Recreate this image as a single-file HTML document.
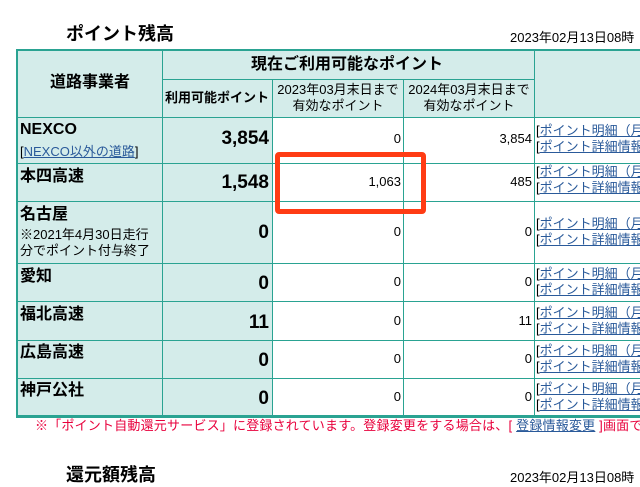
<!DOCTYPE html>
<html><head><meta charset="utf-8"><style>
body{margin:0;width:640px;height:480px;overflow:hidden;background:#fff;font-family:"Liberation Sans","Noto Sans CJK JP",sans-serif;color:#000;position:relative}
.a{position:absolute;white-space:nowrap}
.bg{position:absolute;background:#d4ecea}
.h{position:absolute;background:#2aa392;height:1px}
.v{position:absolute;background:#2aa392;width:1px}
.t{font-size:13px;line-height:16px}
.b{font-weight:bold}
.n{font-size:19px;line-height:22px;font-weight:bold;text-align:right}
.r{text-align:right}
a{color:#2a5a9a;text-decoration:underline}
.c{text-align:center}
.nm{font-size:16px;line-height:18px;font-weight:bold}
</style></head><body>
<div class="a b" style="left:66px;top:20px;font-size:18px">ポイント残高</div>
<div class="a t" style="left:510px;top:30px">2023年02月13日08時</div>

<div class="bg" style="left:17px;top:49px;width:255px;height:368px"></div>
<div class="bg" style="left:162px;top:49px;width:478px;height:68px"></div>

<div class="h" style="left:16px;top:49px;width:624px;height:2px"></div>
<div class="h" style="left:162px;top:79px;width:372px"></div>
<div class="h" style="left:16px;top:117px;width:624px"></div>
<div class="h" style="left:16px;top:163px;width:624px"></div>
<div class="h" style="left:16px;top:201px;width:624px"></div>
<div class="h" style="left:16px;top:263px;width:624px"></div>
<div class="h" style="left:16px;top:301px;width:624px"></div>
<div class="h" style="left:16px;top:340px;width:624px"></div>
<div class="h" style="left:16px;top:378px;width:624px"></div>
<div class="h" style="left:16px;top:415px;width:624px;height:3px"></div>
<div class="v" style="left:16px;top:49px;height:369px;width:2px"></div>
<div class="v" style="left:162px;top:49px;height:368px"></div>
<div class="v" style="left:272px;top:79px;height:338px"></div>
<div class="v" style="left:403px;top:79px;height:338px"></div>
<div class="v" style="left:534px;top:49px;height:368px"></div>

<div class="a nm" style="left:50px;top:74px">道路事業者</div>
<div class="a nm" style="left:251px;top:56px">現在ご利用可能なポイント</div>
<div class="a b t" style="left:165px;top:90px">利用可能ポイント</div>
<div class="a t c" style="left:273px;top:82px;width:130px">2023年03月末日まで<br>有効なポイント</div>
<div class="a t c" style="left:404px;top:82px;width:130px">2024年03月末日まで<br>有効なポイント</div>

<div class="a nm" style="left:20px;top:121px">NEXCO</div>
<div class="a t" style="left:20px;top:144px">[<a>NEXCO以外の道路</a>]</div>
<div class="a nm" style="left:20px;top:168px">本四高速</div>
<div class="a nm" style="left:20px;top:206px">名古屋</div>
<div class="a t" style="left:20px;top:227px">※2021年4月30日走行<br>分でポイント付与終了</div>
<div class="a nm" style="left:20px;top:268px">愛知</div>
<div class="a nm" style="left:20px;top:306px">福北高速</div>
<div class="a nm" style="left:20px;top:344px">広島高速</div>
<div class="a nm" style="left:20px;top:382px">神戸公社</div>

<div class="a n" style="left:163px;width:106px;top:128px">3,854</div>
<div class="a n" style="left:163px;width:106px;top:172px">1,548</div>
<div class="a n" style="left:163px;width:106px;top:222px">0</div>
<div class="a n" style="left:163px;width:106px;top:273px">0</div>
<div class="a n" style="left:163px;width:106px;top:312px">11</div>
<div class="a n" style="left:163px;width:106px;top:350px">0</div>
<div class="a n" style="left:163px;width:106px;top:388px">0</div>

<div class="a t r" style="left:273px;width:128px;top:131px">0</div>
<div class="a t r" style="left:273px;width:128px;top:174px">1,063</div>
<div class="a t r" style="left:273px;width:128px;top:224px">0</div>
<div class="a t r" style="left:273px;width:128px;top:274px">0</div>
<div class="a t r" style="left:273px;width:128px;top:313px">0</div>
<div class="a t r" style="left:273px;width:128px;top:351px">0</div>
<div class="a t r" style="left:273px;width:128px;top:389px">0</div>

<div class="a t r" style="left:404px;width:128px;top:131px">3,854</div>
<div class="a t r" style="left:404px;width:128px;top:174px">485</div>
<div class="a t r" style="left:404px;width:128px;top:224px">0</div>
<div class="a t r" style="left:404px;width:128px;top:274px">0</div>
<div class="a t r" style="left:404px;width:128px;top:313px">11</div>
<div class="a t r" style="left:404px;width:128px;top:351px">0</div>
<div class="a t r" style="left:404px;width:128px;top:389px">0</div>

<div class="a t" style="left:536px;top:123px">[<a>ポイント明細（月</a><br>[<a>ポイント詳細情報</a></div>
<div class="a t" style="left:536px;top:164px">[<a>ポイント明細（月</a><br>[<a>ポイント詳細情報</a></div>
<div class="a t" style="left:536px;top:216px">[<a>ポイント明細（月</a><br>[<a>ポイント詳細情報</a></div>
<div class="a t" style="left:536px;top:266px">[<a>ポイント明細（月</a><br>[<a>ポイント詳細情報</a></div>
<div class="a t" style="left:536px;top:305px">[<a>ポイント明細（月</a><br>[<a>ポイント詳細情報</a></div>
<div class="a t" style="left:536px;top:343px">[<a>ポイント明細（月</a><br>[<a>ポイント詳細情報</a></div>
<div class="a t" style="left:536px;top:381px">[<a>ポイント明細（月</a><br>[<a>ポイント詳細情報</a></div>

<div class="a" style="left:275px;top:152px;width:141px;height:52px;border:5px solid #ff3c14;border-radius:4px"></div>

<div class="a t" style="left:35px;top:418px;color:#e8003c;letter-spacing:0.2px">※「ポイント自動還元サービス」に登録されています。登録変更をする場合は、[ <a>登録情報変更</a> ]画面で</div>

<div class="a b" style="left:66px;top:461px;font-size:18px">還元額残高</div>
<div class="a t" style="left:510px;top:470px">2023年02月13日08時</div>
</body></html>
